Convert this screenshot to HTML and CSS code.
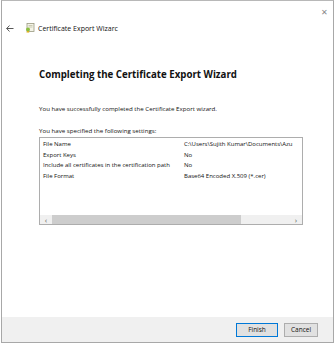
FILE: index.html
```html
<!DOCTYPE html>
<html lang="en">
<head>
    <meta charset="UTF-8">
    <meta name="viewport" content="width=device-width, initial-scale=1.0">
    <title>Certificate Export Wizard</title>
    <link rel="stylesheet" href="styles.css">
</head>
<body>
    <div class="window">
        <div class="titlebar">
            <div class="nav">
                <svg class="back" width="8" height="7" viewBox="0 0 8 7">
                    <path d="M3.5 0.5 L0.7 3.5 L3.5 6.5 M0.7 3.5 H7.5" fill="none" stroke="#444" stroke-width="0.9"/>
                </svg>
                <svg class="cert-icon" width="10" height="10" viewBox="0 0 10 10">
                    <rect x="2" y="0.5" width="7" height="8" fill="#f4f4e8" stroke="#9a9a80" stroke-width="0.8"/>
                    <line x1="3.5" y1="2.5" x2="7.5" y2="2.5" stroke="#b0b090" stroke-width="0.6"/>
                    <line x1="3.5" y1="4" x2="7.5" y2="4" stroke="#b0b090" stroke-width="0.6"/>
                    <circle cx="3" cy="6.5" r="2" fill="#8cbf3f"/>
                    <path d="M2 8 L1.6 10 L3 9.2 L4.2 10 L4 8" fill="#e0b020"/>
                </svg>
                <span class="title">Certificate Export Wizarc</span>
            </div>
            <span class="close">&#x2715;</span>
        </div>
        <div class="content">
            <h1>Completing the Certificate Export Wizard</h1>
            <p class="done">You have successfully completed the Certificate Export wizard.</p>
            <p class="label">You have specified the following settings:</p>
            <div class="listbox">
                <div class="rows">
                    <div class="row"><span class="key">File Name</span><span class="val">C:\Users\Sujith Kumar\Documents\Azu</span></div>
                    <div class="row"><span class="key">Export Keys</span><span class="val">No</span></div>
                    <div class="row"><span class="key">Include all certificates in the certification path</span><span class="val">No</span></div>
                    <div class="row"><span class="key">File Format</span><span class="val">Base64 Encoded X.509 (*.cer)</span></div>
                </div>
                <div class="hscroll">
                    <span class="arrow">&#8249;</span>
                    <div class="track"><div class="thumb"></div></div>
                    <span class="arrow">&#8250;</span>
                </div>
            </div>
        </div>
        <div class="footer">
            <button class="btn primary">Finish</button>
            <button class="btn cancel">Cancel</button>
        </div>
    </div>
</body>
</html>
```

FILE: styles.css
```css
body {
    margin: 0;
    font-family: 'Open Sans', 'Noto Sans', sans-serif;
    color: #000;
    background: #fff;
}
.window {
    width: 331px;
    height: 341px;
    margin-left: 1px;
    border: 1px solid #a8a8a8;
    border-top-color: #b8b8b8;
    display: flex;
    flex-direction: column;
    background: #fff;
}
.titlebar {
    display: flex;
    justify-content: space-between;
    align-items: flex-start;
    height: 52px;
}
.nav {
    display: flex;
    align-items: center;
    margin-top: 22px;
    margin-left: 4px;
}
.back {
    margin-right: 11px;
}
.cert-icon {
    margin-right: 3px;
}
.title {
    font-size: 7px;
    color: #111;
}
.close {
    font-size: 8px;
    color: #888;
    margin: 5px 5px 0 0;
}
.content {
    flex: 1;
    padding-left: 37px;
}
h1 {
    font-size: 9.7px;
    font-weight: bold;
    margin: 15px 0 0;
    color: #111;
}
.done,
.label {
    font-size: 6.15px;
    margin: 0;
    color: #111;
}
.done {
    margin-top: 23px;
}
.label {
    margin-top: 13px;
}
.listbox {
    width: 262px;
    height: 86px;
    margin-top: 2px;
    border: 1px solid #adadad;
    display: flex;
    flex-direction: column;
}
.rows {
    flex: 1;
    overflow: hidden;
    padding-top: 1px;
}
.row {
    display: grid;
    grid-template-columns: 144px 1fr;
    font-size: 6px;
    height: 10.7px;
    line-height: 10.7px;
    white-space: nowrap;
    color: #111;
}
.key {
    padding-left: 3px;
}
.hscroll {
    display: flex;
    align-items: center;
    height: 9px;
    background: #f0f0f0;
}
.arrow {
    width: 12px;
    text-align: center;
    font-size: 8px;
    line-height: 9px;
    color: #606060;
}
.track {
    flex: 1;
    height: 9px;
}
.thumb {
    width: 189px;
    height: 9px;
    background: #cdcdcd;
}
.footer {
    height: 25px;
    background: #f0f0f0;
    display: flex;
    justify-content: flex-end;
    align-items: center;
    gap: 6px;
    padding-right: 15px;
}
.btn {
    width: 42px;
    height: 14px;
    padding: 0;
    font-family: inherit;
    font-size: 6.5px;
    background: #e1e1e1;
    border: 1px solid #adadad;
    color: #111;
}
.btn.primary {
    border-color: #0078d7;
}
.btn.cancel {
    width: 34px;
}
```
